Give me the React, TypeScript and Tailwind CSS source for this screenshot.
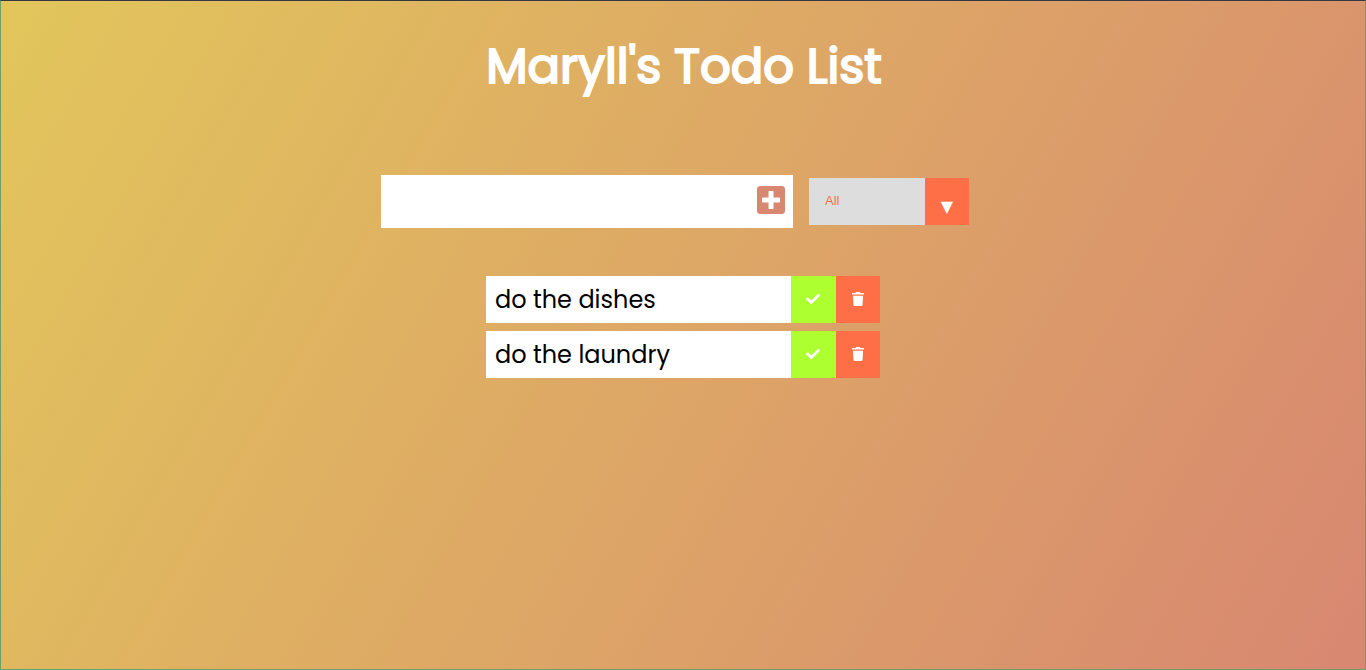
import { useState, type FormEvent } from "react";
import { FaCheck, FaPlusSquare } from "react-icons/fa";

type Todo = { id: number; text: string; done: boolean };

const initialTodos: Todo[] = [
  { id: 1, text: "do the dishes", done: false },
  { id: 2, text: "do the laundry", done: false },
];

function TrashIcon() {
  return (
    <svg width="12" height="14" viewBox="0 0 12 14" fill="currentColor" aria-hidden="true">
      <path d="M.4.9H3.4L3.7.4Q3.9 0 4.4 0H7.6Q8.1 0 8.3.4L8.6.9H11.6Q12 .9 12 1.3V2.6H0V1.3Q0 .9.4.9Z" />
      <path d="M.9 3.7H11.1L10.6 12.8Q10.5 14 9.4 14H2.6Q1.5 14 1.4 12.8Z" />
    </svg>
  );
}

export default function App() {
  const [todos, setTodos] = useState(initialTodos);
  const [draft, setDraft] = useState("");
  const [filter, setFilter] = useState("all");

  const addTodo = (event: FormEvent) => {
    event.preventDefault();
    const text = draft.trim();
    if (!text) return;
    setTodos([...todos, { id: Date.now(), text, done: false }]);
    setDraft("");
  };

  const toggle = (id: number) =>
    setTodos(todos.map((t) => (t.id === id ? { ...t, done: !t.done } : t)));

  const visible = todos.filter(
    (t) => filter === "all" || (filter === "completed") === t.done,
  );

  return (
    <div className="min-h-screen border border-[#6aa06a] border-t-[#333842] bg-linear-[120deg,#e2c65b,#d88771] bg-origin-border font-['Poppins','Inter',sans-serif]">
      <header className="flex min-h-[calc(20vh-1px)] items-center justify-center pb-px pl-0.5 text-white">
        <h1 className="text-5xl font-normal [-webkit-text-stroke:2px_white]">Maryll's Todo List</h1>
      </header>

      <form onSubmit={addTodo} className="flex min-h-[20vh] items-center justify-center">
        <div className="flex bg-white">
          <input
            type="text"
            aria-label="New todo"
            value={draft}
            onChange={(e) => setDraft(e.target.value)}
            className="h-[53px] w-[368px] p-2 text-3xl outline-none"
          />
          <button
            type="submit"
            aria-label="Add todo"
            className="px-1.5 pb-0.5 text-[#d88771]"
          >
            <FaPlusSquare size={32} />
          </button>
        </div>
        <div className="relative mx-4">
          <select
            aria-label="Filter todos"
            value={filter}
            onChange={(e) => setFilter(e.target.value)}
            className="block h-[47px] w-40 appearance-none bg-[#dddddd] px-4 font-['Liberation_Sans',sans-serif] text-[13px] text-[#ff6f47] outline-none"
          >
            <option value="all">All</option>
            <option value="completed">Completed</option>
            <option value="uncompleted">Uncompleted</option>
          </select>
          <span
            aria-hidden="true"
            className="pointer-events-none absolute inset-y-0 right-0 flex w-11 items-center justify-center bg-[#ff6f47] pt-3 font-['DejaVu_Sans',sans-serif] text-base text-white"
          >
            ▼
          </span>
        </div>
      </form>

      <main className="flex justify-center">
        <ul className="w-[394px]">
          {visible.map((todo) => (
            <li key={todo.id} className="my-2 flex h-[47px] bg-white text-2xl text-black">
              <span className={todo.done ? "flex flex-1 items-center px-[9px] line-through opacity-50" : "flex flex-1 items-center px-[9px]"}>
                {todo.text}
              </span>
              <button
                type="button"
                aria-label={`Complete ${todo.text}`}
                onClick={() => toggle(todo.id)}
                className="flex w-[45px] items-start bg-[#adff2f] pt-4 pl-[15px] text-white"
              >
                <FaCheck size={14} />
              </button>
              <button
                type="button"
                aria-label={`Delete ${todo.text}`}
                onClick={() => setTodos(todos.filter((t) => t.id !== todo.id))}
                className="flex w-11 items-start justify-center bg-[#ff6f47] pt-4 text-white"
              >
                <TrashIcon />
              </button>
            </li>
          ))}
        </ul>
      </main>
    </div>
  );
}
